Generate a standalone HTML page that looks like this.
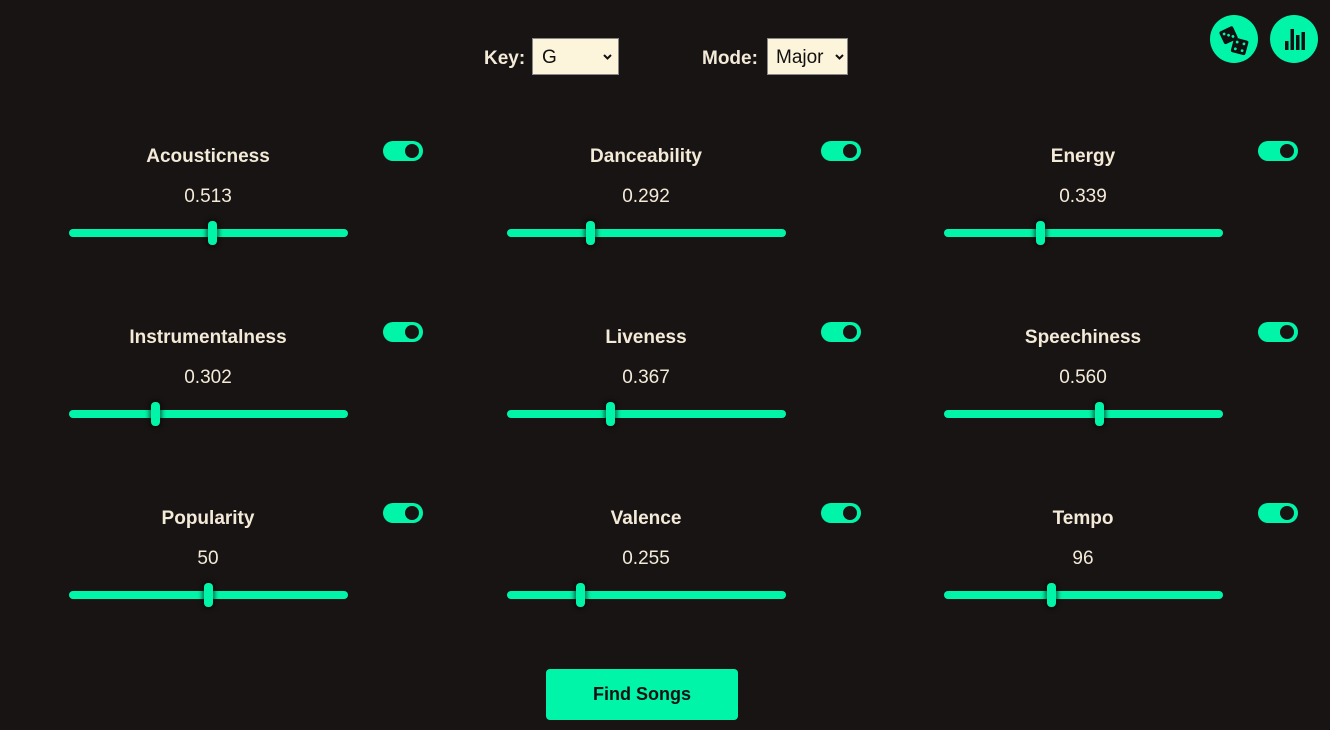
<!DOCTYPE html><html><head><style>
body{margin:0;width:1330px;height:730px;background:#191414;font-family:"Liberation Sans",sans-serif;color:#f3ead8;position:relative;overflow:hidden}
.a{position:absolute}
.lbl{position:absolute;width:300px;text-align:center;font-weight:bold;font-size:19px}
.val{position:absolute;width:300px;text-align:center;font-size:19px}
.tr{position:absolute;width:279px;height:8px;border-radius:4px;background:#00f5a8}
.th{position:absolute;top:-8px;width:9px;height:24px;border-radius:4px;background:#00f5a8;box-shadow:0 0 4px 2px rgba(0,0,0,.55)}
.tg{position:absolute;width:40px;height:20px;border-radius:10px;background:#00f5a8}
.tg:after{content:"";position:absolute;right:4px;top:3px;width:14px;height:14px;border-radius:50%;background:#191414}
.sel{position:absolute;background:#fdf4dc;border:1px solid #888;color:#111;font-size:19px;box-sizing:border-box;height:37px;line-height:37px;padding-left:9px}
.sel svg{position:absolute;right:6px;top:15px}
.cb{position:absolute;width:48px;height:48px;border-radius:50%;background:#00f5a8}
</style></head><body>
<div class="a" style="left:484px;top:48px;font-size:19px;font-weight:bold">Key:</div>
<div class="sel" style="left:532px;top:38px;width:87px">G<svg width="9" height="6" viewBox="0 0 9 6"><path d="M1 1l3.5 3.5L8 1" stroke="#111" stroke-width="2" fill="none"/></svg></div>
<div class="a" style="left:702px;top:48px;font-size:19px;font-weight:bold">Mode:</div>
<div class="sel" style="left:767px;top:38px;width:81px;padding-left:8px">Major<svg width="9" height="6" viewBox="0 0 9 6" style="right:3px"><path d="M1 1l3.5 3.5L8 1" stroke="#111" stroke-width="2" fill="none"/></svg></div>
<div class="cb" style="left:1210px;top:15px"><svg width="48" height="48" viewBox="0 0 48 48"><g transform="rotate(-25 19 20)"><rect x="11" y="13" width="15" height="14" rx="2" fill="#111"/><circle cx="15" cy="17" r="1.4" fill="#00f5a8"/><circle cx="22" cy="23" r="1.4" fill="#00f5a8"/><circle cx="18.5" cy="20" r="1.4" fill="#00f5a8"/></g><g transform="rotate(15 30 32)"><rect x="22" y="24" width="15" height="15" rx="2" fill="#111"/><circle cx="26" cy="28" r="1.4" fill="#00f5a8"/><circle cx="33" cy="28" r="1.4" fill="#00f5a8"/><circle cx="26" cy="35" r="1.4" fill="#00f5a8"/><circle cx="33" cy="35" r="1.4" fill="#00f5a8"/></g></svg></div>
<div class="cb" style="left:1270px;top:15px"><svg width="48" height="48" viewBox="0 0 48 48" fill="#111"><rect x="15" y="26" width="3.5" height="9"/><rect x="20.5" y="14" width="3.5" height="21"/><rect x="26" y="20" width="3.5" height="15"/><rect x="31.5" y="17" width="3.5" height="18"/></svg></div>
<div id="g"></div>
<div class="a" style="left:546px;top:669px;width:192px;height:51px;border-radius:4px;background:#00f5a8;color:#111;font-weight:bold;font-size:18px;text-align:center;line-height:51px">Find Songs</div>
<script>
var d=[["Acousticness","0.513",.513],["Danceability","0.292",.292],["Energy","0.339",.339],["Instrumentalness","0.302",.302],["Liveness","0.367",.367],["Speechiness","0.560",.560],["Popularity","50",.5],["Valence","0.255",.255],["Tempo","96",.38]];
var cx=[208,646,1083],h="";
d.forEach(function(e,i){var c=cx[i%3],y=Math.floor(i/3)*181;
h+='<div class="lbl" style="left:'+(c-150)+'px;top:'+(146+y)+'px">'+e[0]+'</div>';
h+='<div class="val" style="left:'+(c-150)+'px;top:'+(186+y)+'px">'+e[1]+'</div>';
h+='<div class="tr" style="left:'+(c-139)+'px;top:'+(229+y)+'px"><div class="th" style="left:'+Math.round(e[2]*270)+'px"></div></div>';
h+='<div class="tg" style="left:'+(c+175)+'px;top:'+(141+y)+'px"></div>';});
document.getElementById("g").innerHTML=h;
</script>
</body></html>
